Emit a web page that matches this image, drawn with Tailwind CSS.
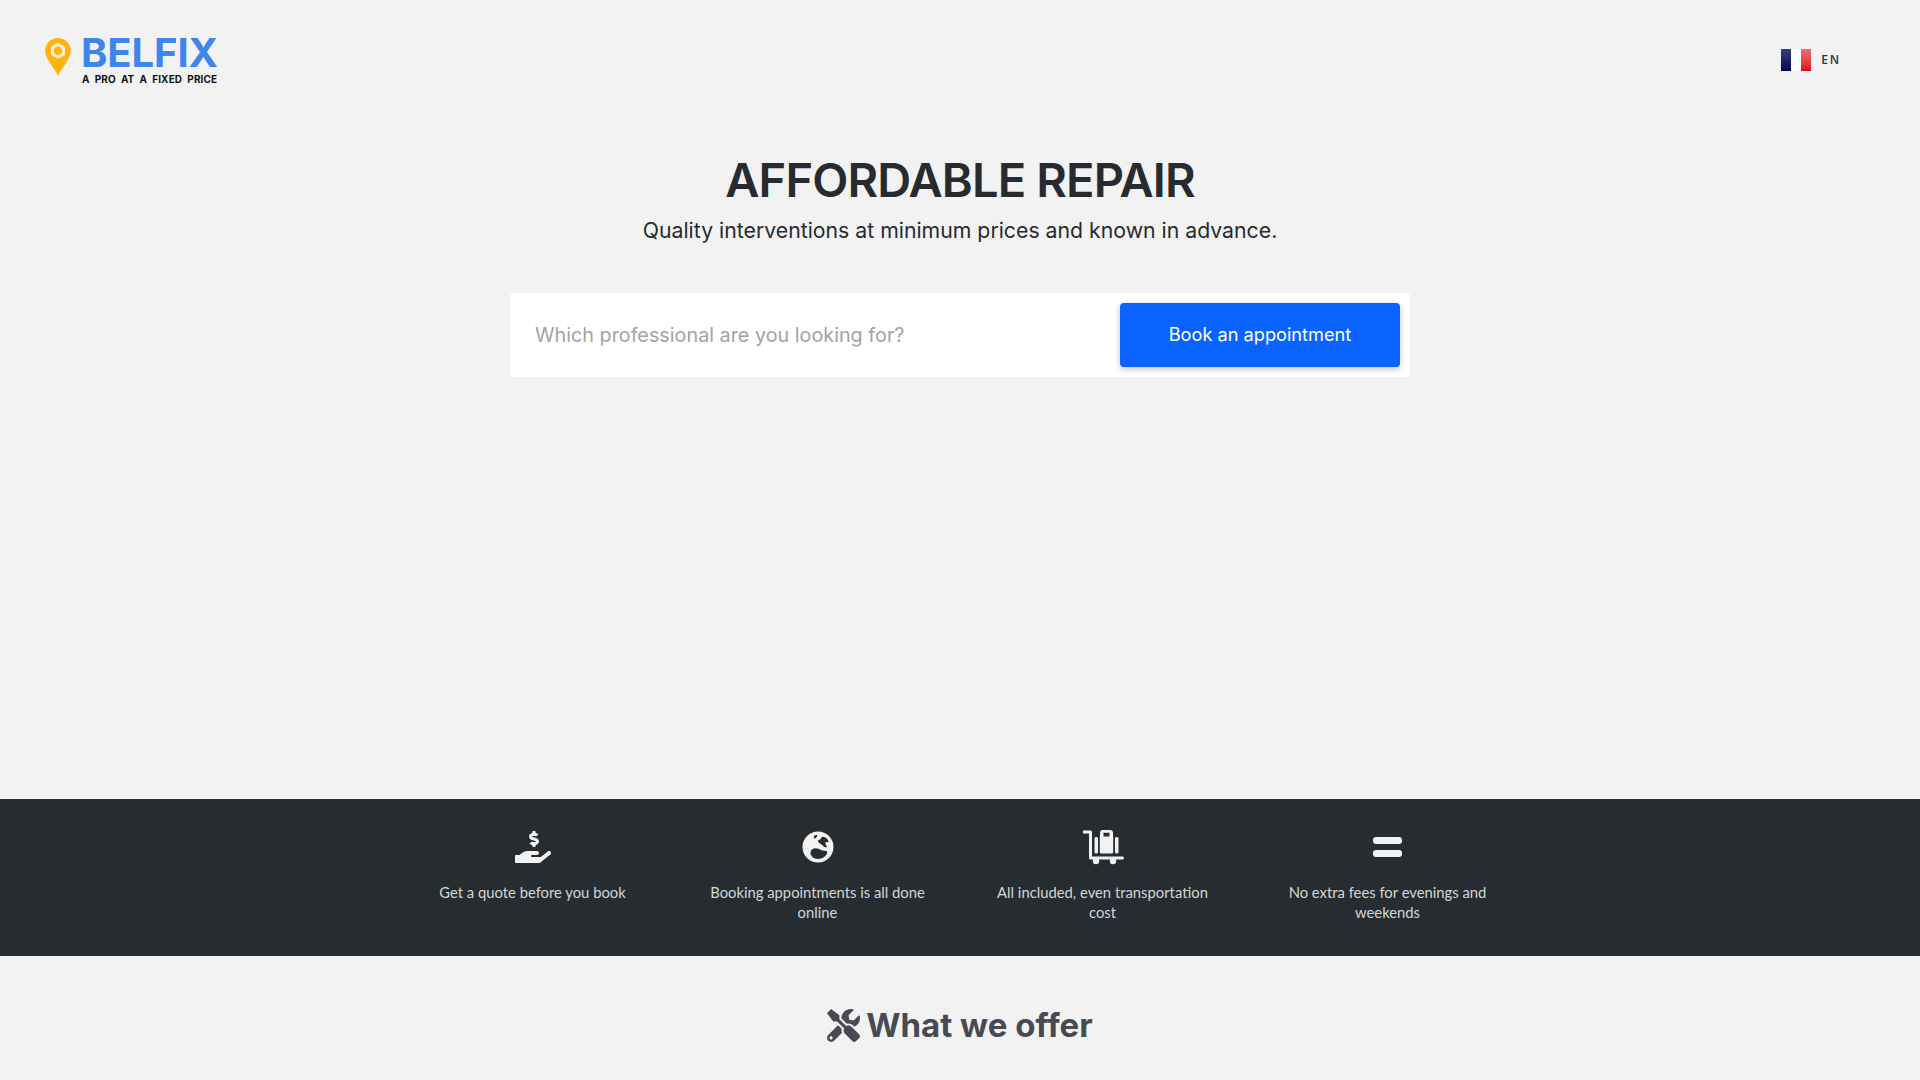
<!DOCTYPE html>
<html lang="en">
<head>
  <meta charset="UTF-8">
  <title>Belfix</title>
  <script src="https://cdn.jsdelivr.net/npm/@tailwindcss/browser@4"></script>
</head>
<body class="bg-[#f2f2f2] font-['Inter',sans-serif]">
  <div class="h-screen overflow-hidden flex flex-col">
    <!-- header -->
    <header class="h-[118px] flex justify-between items-start pl-[45px] pr-[79px] pt-[34px]">
      <div class="flex gap-[10px]">
        <svg class="w-[26px] h-[38px] mt-[4px]" viewBox="0 0 25 37">
          <path fill="#ffb30f" d="M12.5 0C5.6 0 0 5.5 0 12.4 0 21 9.5 29.500 12.500 37 15.500 29.500 25 21 25 12.400 25 5.500 19.400 0 12.500 0z"/>
          <path fill="#fdf0d2" d="M12.500 4.500l6.800 4v7.800l-6.800 4-6.800-4V8.500z"/>
          <circle fill="#ffb30f" cx="12.500" cy="12.400" r="4.200"/>
        </svg>
        <div class="flex flex-col items-start">
          <div class="text-[40px] leading-[38px] font-bold text-[#3f85ec] tracking-[-0.1px]">BELFIX</div>
          <div class="text-[10px] leading-[12px] mt-[1px] ml-[1px] font-bold text-[#111] whitespace-pre tracking-[0.15px]">A  PRO  AT  A  FIXED  PRICE</div>
        </div>
      </div>
      <div class="flex items-center gap-[10px] mt-[15px]">
        <div class="w-[30px] h-[22px] flex">
          <div class="flex-1 bg-gradient-to-b from-[#3c3c80] to-[#05054f]"></div>
          <div class="flex-1 bg-white"></div>
          <div class="flex-1 bg-gradient-to-b from-[#ef6b72] to-[#d8001c]"></div>
        </div>
        <span class="font-['Open_Sans',sans-serif] text-[12px] font-semibold tracking-[1.8px] text-[#333]">EN</span>
      </div>
    </header>

    <!-- hero -->
    <main class="h-[681px] flex flex-col items-center shrink-0">
      <h1 class="mt-[32px] text-[47px] leading-[60px] font-semibold text-[#272b30] tracking-[-0.85px]">AFFORDABLE REPAIR</h1>
      <p class="mt-[5px] text-[21.25px] leading-[30px] text-[#272b30] font-normal">Quality interventions at minimum prices and known in advance.</p>
      <div class="mt-[48px] w-[900px] h-[84px] bg-white rounded-[4px] flex items-center justify-between pl-[25px] pr-[10px]">
        <span class="pt-[2px] text-[19.8px] text-[#a3a3a3]">Which professional are you looking for?</span>
        <button class="w-[280px] h-[64px] rounded-[4px] bg-[#0a63ff] text-white text-[18.2px] shadow-[0_2px_6px_rgba(0,0,0,0.25)]">Book an appointment</button>
      </div>
    </main>

    <!-- features band -->
    <section class="h-[157px] bg-[#272c30] shrink-0 flex justify-center">
      <div class="w-[1140px] grid grid-cols-4 font-['Lato',sans-serif] text-[14.8px] leading-[20px] text-[#d4d6d8] text-center">
        <div class="flex flex-col items-center pt-[30px] px-[30px]">
          <svg class="h-[36px] w-[36px]" viewBox="0 0 576 576" fill="#f2f2f2"><g transform="translate(0 32)"><path d="M271.060 144.300l54.270 14.300a8.590 8.590 0 0 1 6.630 8.100c0 4.600-4.090 8.400-9.120 8.400h-35.600a30 30 0 0 1-11.190-2.200c-5.240-2.200-11.280-1.700-15.300 2l-19 17.500a11.680 11.680 0 0 0-2.250 2.660 11.420 11.420 0 0 0 3.880 15.740 83.770 83.770 0 0 0 34.510 11.500V240c0 8.800 7.830 16 17.370 16h17.370c9.550 0 17.380-7.200 17.380-16v-17.600c32.930-3.600 57.840-31 53.500-63-3.150-23-22.460-41.300-46.560-47.700L282.680 97.400a8.590 8.590 0 0 1-6.630-8.100c0-4.600 4.090-8.400 9.120-8.400h35.600A30 30 0 0 1 332 83.100c5.230 2.200 11.280 1.700 15.300-2l19-17.500a11.310 11.310 0 0 0 2.170-2.600 11.430 11.430 0 0 0-3.840-15.780 83.820 83.820 0 0 0-34.520-11.500V16c0-8.800-7.820-16-17.370-16h-17.370C285.820 0 278 7.200 278 16v17.600c-32.890 3.600-57.850 31-53.510 63C227.630 119.600 247 137.900 271.060 144.300zM565.270 328.100c-11.800-10.700-30.200-10-42.600 0L430.270 402a63.640 63.640 0 0 1-40 14H272a16 16 0 0 1 0-32h78.290c15.900 0 30.710-10.900 33.250-26.600a31.200 31.200 0 0 0 .46-5.460A32 32 0 0 0 352 320H192a117.660 117.660 0 0 0-74.100 26.290L71.400 384H16a16 16 0 0 0-16 16v96a16 16 0 0 0 16 16h356.770a64 64 0 0 0 40-14L564 377a32 32 0 0 0 1.270-48.900z"/></g></svg>
          <p class="mt-[17px]">Get a quote before you book</p>
        </div>
        <div class="flex flex-col items-center pt-[30px] px-[30px]">
          <svg class="h-[36px] w-[36px]" viewBox="0 0 36 36"><path fill="#f2f2f2" fill-rule="evenodd" d="M18 2.500a15.500 15.500 0 1 0 0 31 15.500 15.500 0 0 0 0-31zM14.500 6.500c1-.6 2.400-.7 2.800 0 .3.700-.5 1.300-1.100 2-.7.800-1.500 1.300-2 .7-.6-.6-.5-2 .3-2.700zM22 8c1.300-.6 3.500.4 4.800 1.600 1.200 1.200 2 2.800 1.600 3.400-.5.700-1.800-.4-2.600.2-.8.700-.3 2.300.6 3.200.9 1 .4 1.800-.4 1.800-1.600 0-3-1.500-4.500-2.800-1.400-1.200-3.400-1.900-3.500-3.200-.1-1.400 1.100-1.200 2-1.600 1-.6 1.200-2 2-2.600zM12.500 20c2-1.200 4.500-.9 6.500 0 1.500.7 3 1.700 4.800 1.800 1.300.1 3 .2 3.400 1 .5 1.300-.8 3.500-2.700 5-2 1.500-4.200 2.200-6.500 2.200-2.300 0-4.300-.8-5.700-2.200-1.300-1.300-2-3-1.800-4.400.2-1.400.9-2.600 2-3.400z"/></svg>
          <p class="mt-[17px]">Booking appointments is all done online</p>
        </div>
        <div class="flex flex-col items-center pt-[30px] px-[30px]">
          <svg class="h-[36px] w-[42px]" viewBox="0 0 42 36" fill="#f2f2f2">
            <path d="M1 1.500h7.500a1.500 1.500 0 0 1 1.500 1.500v24.500h30.500a1.500 1.500 0 0 1 0 3H8.500A1.500 1.500 0 0 1 7 29V4.500H1z"/>
            <circle cx="14" cy="32" r="3.200"/><circle cx="31" cy="32" r="3.200"/>
            <rect x="12.500" y="8" width="3.500" height="16.500" rx="1.500"/>
            <rect x="33" y="8" width="3.500" height="16.500" rx="1.500"/>
            <path fill-rule="evenodd" d="M21 1h7a3 3 0 0 1 3 3v3.500h.200V23a1.500 1.500 0 0 1-1.500 1.500H19.300A1.500 1.500 0 0 1 17.800 23V7.500h.200V4a3 3 0 0 1 3-3zM21.500 3.800v3.700h6V3.800z"/>
          </svg>
          <p class="mt-[17px]">All included, even transportation cost</p>
        </div>
        <div class="flex flex-col items-center pt-[30px] px-[30px]">
          <div class="h-[36px] flex flex-col justify-center gap-[6px]">
            <div class="w-[29px] h-[7px] rounded-[3px] bg-[#f2f2f2]"></div>
            <div class="w-[29px] h-[7px] rounded-[3px] bg-[#f2f2f2]"></div>
          </div>
          <p class="mt-[17px]">No extra fees for evenings and weekends</p>
        </div>
      </div>
    </section>

    <!-- what we offer -->
    <section class="flex justify-center items-center gap-[6px] pt-[49px] shrink-0">
      <svg class="w-[33px] h-[33px]" viewBox="0 0 512 512" fill="#474a52"><path d="M501.100 395.700L384 278.600c-23.100-23.100-57.600-27.600-85.400-13.900L192 158.100V96L64 0 0 64l96 128h62.100l106.600 106.600c-13.600 27.800-9.200 62.300 13.900 85.400l117.100 117.100c14.600 14.600 38.200 14.600 52.700 0l52.700-52.700c14.500-14.600 14.500-38.200 0-52.700zM331.700 225c28.300 0 54.900 11 74.900 31l19.400 19.400c15.800-6.900 30.800-16.500 43.800-29.500 37.100-37.100 49.700-89.300 37.900-136.700-2.200-9-13.500-12.100-20.100-5.500l-74.400 74.400-67.900-11.300L334 98.900l74.400-74.400c6.600-6.600 3.400-17.900-5.700-20.200-47.400-11.700-99.600.9-136.600 37.900-28.500 28.500-41.900 66.100-41.200 103.600l82.100 82.100c8.100-1.900 16.500-2.900 24.700-2.900zm-103.900 82l-56.700-56.700L18.700 402.800c-25 25-25 65.500 0 90.500s65.500 25 90.500 0l123.600-123.600c-7.600-19.900-9.900-41.600-5-62.700zM64 472c-13.200 0-24-10.800-24-24 0-13.300 10.700-24 24-24s24 10.700 24 24c0 13.200-10.700 24-24 24z"/></svg>
      <h2 class="text-[33px] leading-[40px] font-bold text-[#474a52]">What we offer</h2>
    </section>
  </div>
</body>
</html>
